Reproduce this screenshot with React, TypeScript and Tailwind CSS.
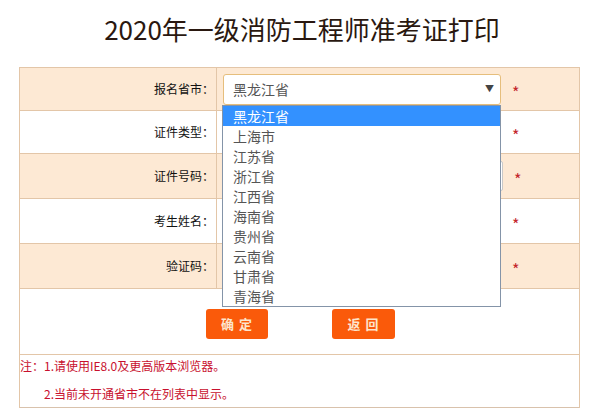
const provinces = ['黑龙江省', '上海市', '江苏省', '浙江省', '江西省', '海南省', '贵州省', '云南省', '甘肃省', '青海省']

function Star() {
  return <span className="ml-[11px] mt-[6px] text-[16px] leading-none text-[#c3262c]">*</span>
}

function Row({ label, peach, h, children }: { label: string; peach?: boolean; h: string; children?: React.ReactNode }) {
  return (
    <div className={`flex border-b border-[#e3c6a8] ${h} ${peach ? 'bg-[#fde9d4]' : 'bg-white'}`}>
      <div className="flex w-[197px] items-center justify-end border-r border-[#e3c6a8] pr-[2px] text-[12px] text-[#111]">
        {label}
      </div>
      <div className="flex flex-1 items-center pl-[6px]">{children}</div>
    </div>
  )
}

export default function App() {
  return (
    <div className="h-[420px] w-[604px] bg-white" style={{ fontFamily: '"Noto Sans CJK SC", "Noto Sans", sans-serif' }}>
      <div className="flex h-[67px] items-center justify-center pb-[10px] text-[26px] text-[#2a1810]">
        2020年一级消防工程师准考证打印
      </div>
      <div className="relative ml-[19px] w-[561px] border-x border-t border-[#e3c6a8]">
        <Row label="报名省市：" peach h="h-[43px]">
          <div className="flex h-[31px] w-[278px] items-center justify-between rounded-[3px] border border-[#e6be7c] bg-white pl-[9px] pr-[6px] text-[14px] text-[#555]">
            <span>黑龙江省</span>
            <span className="text-[9px] text-[#444]">▼</span>
          </div>
          <Star />
        </Row>
        <Row label="证件类型：" h="h-[43px]">
          <div className="w-[278px]" />
          <Star />
        </Row>
        <Row label="证件号码：" peach h="h-[45px]">
          <div className="h-[30px] w-[280px] rounded-[2px] border border-[#c9c9c9] bg-white" />
          <Star />
        </Row>
        <Row label="考生姓名：" h="h-[45px]">
          <div className="w-[278px]" />
          <Star />
        </Row>
        <Row label="验证码：" peach h="h-[45px]">
          <div className="w-[278px]" />
          <Star />
        </Row>
        <div className="flex h-[66px] items-center border-b border-[#e3c6a8] bg-white pt-[4px]">
          <button className="ml-[186px] h-[30px] w-[62px] rounded-[3px] bg-[#fa5a0a] pl-[4px] text-[13px] font-bold tracking-[5px] text-[#fde5cc]">
            确定
          </button>
          <button className="ml-[64px] h-[30px] w-[63px] rounded-[3px] bg-[#fa5a0a] pl-[4px] text-[13px] font-bold tracking-[5px] text-[#fde5cc]">
            返回
          </button>
        </div>
        <div className="flex h-[53px] flex-col justify-center gap-[10px] border-b border-[#d9c2ac] bg-white pb-[2px] text-[12px] text-[#c8102e]">
          <div>注：1.请使用IE8.0及更高版本浏览器。</div>
          <div className="pl-[24px]">2.当前未开通省市不在列表中显示。</div>
        </div>

        <div className="absolute left-[202px] top-[37px] w-[279px] border border-[#8494a8] bg-white text-[14px] text-[#555]">
          {provinces.map((p, i) => (
            <div key={p} className={`flex h-[20px] items-center pl-[10px] ${i === 0 ? 'bg-[#3391ff] text-white' : ''}`}>
              {p}
            </div>
          ))}
        </div>
      </div>
    </div>
  )
}
